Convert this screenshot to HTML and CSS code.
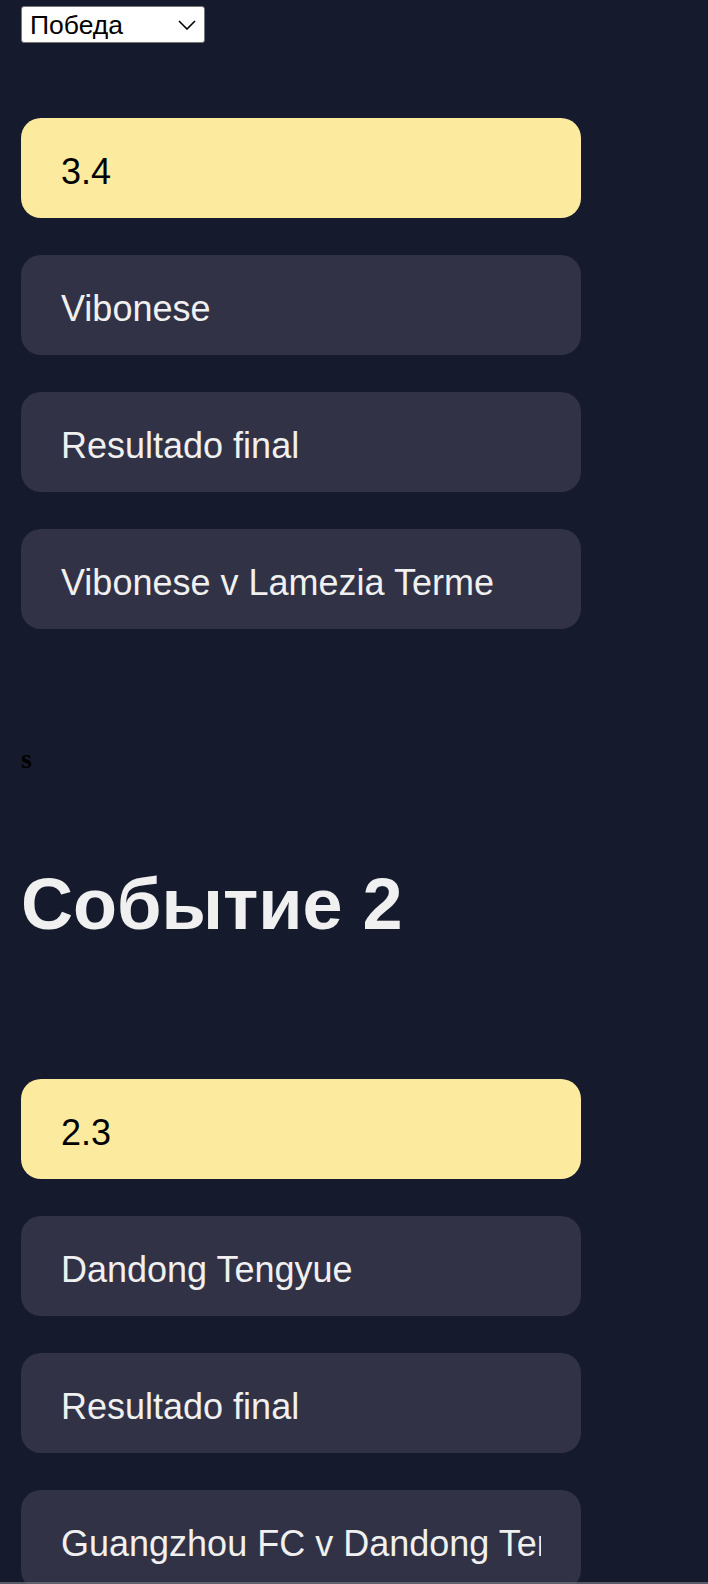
FILE: index.html
```html
<!DOCTYPE html>
<html lang="ru">
<head>
    <meta charset="UTF-8">
    <meta name="viewport" content="width=device-width, initial-scale=1.0">
    <title>События</title>
    <link rel="stylesheet" href="styles.css">
</head>
<body>
    <div class="page">
        <div class="picker-wrap">
            <select class="picker">
                <option>Победа</option>
                <option>Ничья</option>
                <option>Поражение</option>
            </select>
            <svg class="picker-arrow" width="18" height="10" viewBox="0 0 18 10">
                <path d="M1 1 L9 9 L17 1" fill="none" stroke="#000" stroke-width="1.6"/>
            </svg>
        </div>

        <div class="event first-event">
            <div class="item odds"><div class="item-text">3.4</div></div>
            <div class="item"><div class="item-text">Vibonese</div></div>
            <div class="item"><div class="item-text">Resultado final</div></div>
            <div class="item"><div class="item-text">Vibonese v Lamezia Terme</div></div>
        </div>

        <div class="stray">s</div>

        <h1 class="event-title">Событие 2</h1>

        <div class="event">
            <div class="item odds"><div class="item-text">2.3</div></div>
            <div class="item"><div class="item-text">Dandong Tengyue</div></div>
            <div class="item"><div class="item-text">Resultado final</div></div>
            <div class="item"><div class="item-text">Guangzhou FC v Dandong Tengyue</div></div>
        </div>
    </div>
    <div class="scroll-edge"></div>
</body>
</html>
```

FILE: styles.css
```css
body {
    margin: 0;
    background-color: #161a2d;
    overflow: hidden;
}

.page {
    padding: 6px 21px 0;
}

.picker-wrap {
    position: relative;
    width: 184px;
}

.picker {
    display: block;
    width: 184px;
    height: 37px;
    font-family: "Liberation Sans", Arial, sans-serif;
    font-size: 26.5px;
    background: #fff;
    color: #000;
    border: 1px solid #767676;
    border-radius: 3px;
    padding: 0 8px;
    margin: 0;
    appearance: none;
    -webkit-appearance: none;
}

.picker-arrow {
    position: absolute;
    right: 9px;
    top: 14px;
    pointer-events: none;
}

.event {
    display: flex;
    flex-direction: column;
    gap: 37px;
    width: 560px;
}

.first-event {
    margin-top: 75px;
}

.item {
    background-color: #323246;
    color: #f0f0f0;
    border-radius: 20px;
    padding: 34px 40px 26px;
    height: 100px;
    box-sizing: border-box;
    font-family: "Liberation Sans", Arial, sans-serif;
    font-size: 36px;
    line-height: 40px;
}

.item-text {
    white-space: nowrap;
    overflow: hidden;
}

.odds {
    background-color: #fcea9f;
    color: #000;
}

.stray {
    margin-top: 115px;
    font-family: "Liberation Serif", "Times New Roman", serif;
    font-weight: bold;
    font-size: 28px;
    line-height: 30px;
    color: #000;
}

.event-title {
    margin: 89px 0 134px;
    font-family: "Liberation Sans", Arial, sans-serif;
    font-size: 72px;
    line-height: 82px;
    font-weight: bold;
    color: #f0f0f0;
}

.scroll-edge {
    position: fixed;
    left: 0;
    right: 0;
    bottom: 0;
    height: 2px;
    background: rgba(120, 120, 130, 0.7);
}
```
